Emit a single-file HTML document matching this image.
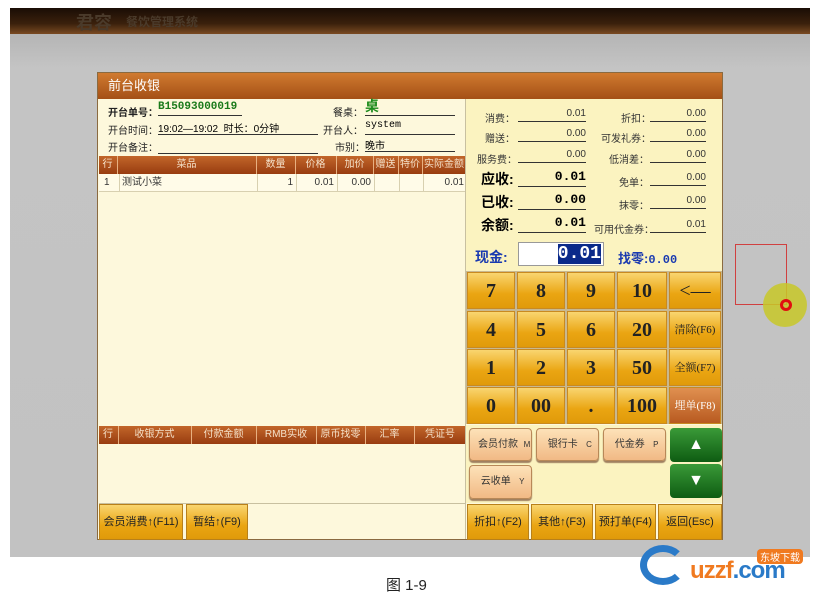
<!DOCTYPE html>
<html><head><meta charset="utf-8"><style>
*{margin:0;padding:0;box-sizing:border-box}
body{width:820px;height:603px;background:#fff;position:relative;overflow:hidden;font-family:"Liberation Sans","Noto Sans CJK SC",sans-serif}
.a{position:absolute}
.gray{left:10px;top:8px;width:800px;height:549px;background:linear-gradient(#a9a9a9,#c4c4c4 60px,#c2c2c2)}
.hdr{left:10px;top:8px;width:800px;height:26px;background:linear-gradient(#1a0d05,#3a200c 60%,#7a4a22)}
.dlg{left:97px;top:72px;width:626px;height:468px;background:#fdf8dc;border:1px solid #8a6a40}
.title{left:0;top:0;width:624px;height:26px;background:linear-gradient(#d07a30,#a45016);color:#fff;font-size:13px;line-height:26px;padding-left:10px}
.lbl{font-size:10px;color:#222}
.ul{border-bottom:1px solid #333}
.th{background:linear-gradient(#c2662a,#983c10);color:#f4e0c8;font-size:10px;text-align:center;line-height:18px;height:18px}
.key{background:linear-gradient(#f9d570,#eaa512 60%,#e09a0a);border:1px solid #c98a20;font-family:"Liberation Serif","Noto Serif CJK SC",serif;font-weight:bold;font-size:20px;color:#222;text-align:center;line-height:36px}
.kf{font-size:11px;font-weight:normal}
.pb{background:linear-gradient(#fde2b8,#f1b985);border:1px solid #b88858;border-radius:4px;font-size:10px;color:#333;padding:6px 0 0 8px;box-shadow:0 2px 1px #a08060}
.gb{background:linear-gradient(#3a9a38,#0e5c12);border-radius:4px;color:#fff;text-align:center;font-size:16px}
.bb{background:linear-gradient(#f9d570,#eaa512 60%,#e09a0a);border:1px solid #b8801a;font-size:11px;color:#222;text-align:center;line-height:34px}
.r{text-align:right}
.s{font-size:10px;color:#333}
</style></head><body>
<div class="a gray"></div>
<div class="a hdr"></div>
<div class="a" style="left:76px;top:9px;font-size:18px;font-weight:bold;color:#4a3a2a">君容</div>
<div class="a" style="left:126px;top:13px;font-size:12px;font-weight:bold;color:#4a3a2a">餐饮管理系统</div>

<div class="a dlg">
<div class="a title">前台收银</div>
<!-- info -->
<div class="a lbl" style="left:10px;top:31px;font-weight:bold">开台单号：</div>
<div class="a ul" style="left:60px;top:28px;width:84px;height:15px;font-family:'Liberation Mono',monospace;font-weight:bold;color:#1a7a1a;font-size:11px">B15093000019</div>
<div class="a lbl" style="left:235px;top:31px">餐桌：</div>
<div class="a ul" style="left:267px;top:26px;width:90px;height:17px;color:#1a8a1a;font-weight:bold;font-size:14px;line-height:14px">桌</div>
<div class="a lbl" style="left:10px;top:49px">开台时间：</div>
<div class="a ul" style="left:60px;top:47px;width:160px;height:15px;font-size:10px">19:02—19:02 &nbsp;时长：0分钟</div>
<div class="a lbl" style="left:225px;top:49px">开台人：</div>
<div class="a ul" style="left:267px;top:47px;width:90px;height:15px;font-size:10px;font-family:'Liberation Mono',monospace">system</div>
<div class="a lbl" style="left:10px;top:66px">开台备注：</div>
<div class="a ul" style="left:60px;top:66px;width:160px;height:15px"></div>
<div class="a lbl" style="left:237px;top:66px">市别：</div>
<div class="a ul" style="left:267px;top:64px;width:90px;height:15px;font-size:10px">晚市</div>
<!-- table -->
<div class="a th" style="left:1px;top:83px;width:366px;"></div>
<div class="a th" style="left:1px;top:83px;width:17px">行</div>
<div class="a th" style="left:19px;top:83px;width:138px;border-left:1px solid #e8b080">菜品</div>
<div class="a th" style="left:158px;top:83px;width:38px;border-left:1px solid #e8b080">数量</div>
<div class="a th" style="left:197px;top:83px;width:40px;border-left:1px solid #e8b080">价格</div>
<div class="a th" style="left:238px;top:83px;width:36px;border-left:1px solid #e8b080">加价</div>
<div class="a th" style="left:275px;top:83px;width:24px;border-left:1px solid #e8b080">赠送</div>
<div class="a th" style="left:300px;top:83px;width:23px;border-left:1px solid #e8b080">特价</div>
<div class="a th" style="left:324px;top:83px;width:43px;border-left:1px solid #e8b080">实际金额</div>
<div class="a s" style="left:1px;top:101px;width:366px;height:18px;border-bottom:1px solid #d8d0b0;line-height:18px;background:#fffbe8">
<span class="a" style="left:5px">1</span><span class="a" style="left:20px;border-left:1px solid #d8d0b0;padding-left:2px;height:18px">测试小菜</span>
<span class="a r" style="left:158px;width:36px;border-left:1px solid #d8d0b0;height:18px">1</span>
<span class="a r" style="left:197px;width:38px;border-left:1px solid #d8d0b0;height:18px">0.01</span>
<span class="a r" style="left:238px;width:34px;border-left:1px solid #d8d0b0;height:18px">0.00</span>
<span class="a" style="left:275px;width:24px;border-left:1px solid #d8d0b0;height:18px"></span>
<span class="a" style="left:300px;width:23px;border-left:1px solid #d8d0b0;height:18px"></span>
<span class="a r" style="left:324px;width:41px;border-left:1px solid #d8d0b0;height:18px">0.01</span></div>
<!-- payment table -->
<div class="a th" style="left:1px;top:353px;width:366px"></div>
<div class="a th" style="left:1px;top:353px;width:18px">行</div>
<div class="a th" style="left:20px;top:353px;width:72px;border-left:1px solid #e8b080">收银方式</div>
<div class="a th" style="left:93px;top:353px;width:64px;border-left:1px solid #e8b080">付款金额</div>
<div class="a th" style="left:158px;top:353px;width:59px;border-left:1px solid #e8b080">RMB实收</div>
<div class="a th" style="left:218px;top:353px;width:48px;border-left:1px solid #e8b080">原币找零</div>
<div class="a th" style="left:267px;top:353px;width:48px;border-left:1px solid #e8b080">汇率</div>
<div class="a th" style="left:316px;top:353px;width:51px;border-left:1px solid #e8b080">凭证号</div>
<div class="a" style="left:1px;top:430px;width:366px;border-top:1px solid #c8c0a0"></div>
<div class="a bb" style="left:1px;top:431px;width:84px;height:36px">会员消费↑(F11)</div>
<div class="a bb" style="left:88px;top:431px;width:62px;height:36px">暂结↑(F9)</div>
<div class="a" style="left:367px;top:26px;width:1px;height:440px;background:#c8c0a0"></div>
<!-- right summary -->
<div class="a" style="left:368px;top:26px;width:256px;height:172px;background:#fbf3c0"></div>
<div class="a s" style="left:387px;top:37px">消费：</div><div class="a s ul r" style="left:420px;top:35px;width:68px;height:14px">0.01</div>
<div class="a s" style="left:523px;top:37px">折扣：</div><div class="a s ul r" style="left:552px;top:35px;width:56px;height:14px">0.00</div>
<div class="a s" style="left:387px;top:57px">赠送：</div><div class="a s ul r" style="left:420px;top:55px;width:68px;height:14px">0.00</div>
<div class="a s" style="left:503px;top:57px">可发礼券：</div><div class="a s ul r" style="left:552px;top:55px;width:56px;height:14px">0.00</div>
<div class="a s" style="left:379px;top:78px">服务费：</div><div class="a s ul r" style="left:420px;top:76px;width:68px;height:14px">0.00</div>
<div class="a s" style="left:511px;top:78px">低消差：</div><div class="a s ul r" style="left:552px;top:76px;width:56px;height:14px">0.00</div>
<div class="a" style="left:383px;top:96px;font-size:14px;font-weight:bold">应收:</div><div class="a ul r" style="left:420px;top:96px;width:68px;height:18px;font-size:13px;font-weight:bold;font-family:'Liberation Mono',monospace">0.01</div>
<div class="a s" style="left:521px;top:101px">免单：</div><div class="a s ul r" style="left:552px;top:99px;width:56px;height:14px">0.00</div>
<div class="a" style="left:383px;top:119px;font-size:14px;font-weight:bold">已收:</div><div class="a ul r" style="left:420px;top:119px;width:68px;height:18px;font-size:13px;font-weight:bold;font-family:'Liberation Mono',monospace">0.00</div>
<div class="a s" style="left:521px;top:124px">抹零：</div><div class="a s ul r" style="left:552px;top:122px;width:56px;height:14px">0.00</div>
<div class="a" style="left:383px;top:142px;font-size:14px;font-weight:bold">余额:</div><div class="a ul r" style="left:420px;top:142px;width:68px;height:18px;font-size:13px;font-weight:bold;font-family:'Liberation Mono',monospace">0.01</div>
<div class="a s" style="left:496px;top:148px">可用代金券：</div><div class="a s ul r" style="left:552px;top:146px;width:56px;height:14px">0.01</div>
<div class="a" style="left:377px;top:174px;font-size:14px;font-weight:bold;color:#1a3ab0">现金:</div>
<div class="a" style="left:420px;top:169px;width:86px;height:24px;background:#fff;border:1px solid #999;text-align:right;padding-right:2px"><span style="background:#0a2a8a;color:#fff;font-size:18px;font-weight:bold;font-family:'Liberation Mono',monospace;line-height:22px">0.01</span></div>
<div class="a" style="left:520px;top:175px;font-size:13px;font-weight:bold;color:#1a3ab0">找零:<span style="font-family:'Liberation Mono',monospace;font-size:12px">0.00</span></div>
<!-- keypad -->
<div class="a" style="left:368px;top:198px;width:256px;height:153px;background:#c8b890"></div>
<div class="a key" style="left:369px;top:199px;width:48px;height:37px">7</div>
<div class="a key" style="left:419px;top:199px;width:48px;height:37px">8</div>
<div class="a key" style="left:469px;top:199px;width:48px;height:37px">9</div>
<div class="a key" style="left:519px;top:199px;width:50px;height:37px">10</div>
<div class="a key" style="left:571px;top:199px;width:52px;height:37px;font-weight:normal">&lt;—</div>
<div class="a key" style="left:369px;top:238px;width:48px;height:37px">4</div>
<div class="a key" style="left:419px;top:238px;width:48px;height:37px">5</div>
<div class="a key" style="left:469px;top:238px;width:48px;height:37px">6</div>
<div class="a key" style="left:519px;top:238px;width:50px;height:37px">20</div>
<div class="a key kf" style="left:571px;top:238px;width:52px;height:37px">清除(F6)</div>
<div class="a key" style="left:369px;top:276px;width:48px;height:37px">1</div>
<div class="a key" style="left:419px;top:276px;width:48px;height:37px">2</div>
<div class="a key" style="left:469px;top:276px;width:48px;height:37px">3</div>
<div class="a key" style="left:519px;top:276px;width:50px;height:37px">50</div>
<div class="a key kf" style="left:571px;top:276px;width:52px;height:37px">全额(F7)</div>
<div class="a key" style="left:369px;top:314px;width:48px;height:37px">0</div>
<div class="a key" style="left:419px;top:314px;width:48px;height:37px">00</div>
<div class="a key" style="left:469px;top:314px;width:48px;height:37px">.</div>
<div class="a key" style="left:519px;top:314px;width:50px;height:37px">100</div>
<div class="a key kf" style="left:571px;top:314px;width:52px;height:37px;background:linear-gradient(#e09050,#b85a20);color:#fff">埋单(F8)</div>
<!-- pay buttons -->
<div class="a" style="left:368px;top:352px;width:256px;height:78px;background:#fbf3c0"></div>
<div class="a pb" style="left:371px;top:355px;width:63px;height:33px">会员付款 &nbsp;<span style="font-size:8px">M</span></div>
<div class="a pb" style="left:438px;top:355px;width:63px;height:33px">&nbsp;银行卡 &nbsp;&nbsp;<span style="font-size:8px">C</span></div>
<div class="a pb" style="left:505px;top:355px;width:63px;height:33px">&nbsp;代金券 &nbsp;&nbsp;<span style="font-size:8px">P</span></div>
<div class="a pb" style="left:371px;top:392px;width:63px;height:34px">&nbsp;云收单 &nbsp;&nbsp;<span style="font-size:8px">Y</span></div>
<div class="a gb" style="left:572px;top:355px;width:52px;height:34px;line-height:34px">▲</div>
<div class="a gb" style="left:572px;top:391px;width:52px;height:34px;line-height:34px">▼</div>
<div class="a bb" style="left:369px;top:431px;width:62px;height:36px">折扣↑(F2)</div>
<div class="a bb" style="left:433px;top:431px;width:62px;height:36px">其他↑(F3)</div>
<div class="a bb" style="left:497px;top:431px;width:61px;height:36px">预打单(F4)</div>
<div class="a bb" style="left:560px;top:431px;width:64px;height:36px">返回(Esc)</div>
</div>
<!-- cursor highlight -->
<div class="a" style="left:735px;top:244px;width:52px;height:61px;border:1px solid #d04040"></div>
<div class="a" style="left:763px;top:283px;width:44px;height:44px;border-radius:50%;background:rgba(200,200,40,0.85)"></div>
<div class="a" style="left:780px;top:299px;width:12px;height:12px;border-radius:50%;border:3px solid #e01010"></div>
<!-- caption -->
<div class="a" style="left:386px;top:574px;font-size:15px;color:#222">图 1-9</div>
<!-- logo -->
<div class="a" style="left:640px;top:545px;width:46px;height:40px;border:7px solid #2a7ac8;border-radius:50%;border-right-color:transparent"></div>
<div class="a" style="left:690px;top:557px;font-size:24px;font-weight:bold;color:#f07a20;letter-spacing:-1px">uzzf<span style="color:#2a7ac8">.com</span></div>
<div class="a" style="left:757px;top:549px;background:#f07a20;color:#fff;font-size:10px;padding:0 3px;border-radius:4px">东坡下载</div>
</body></html>
